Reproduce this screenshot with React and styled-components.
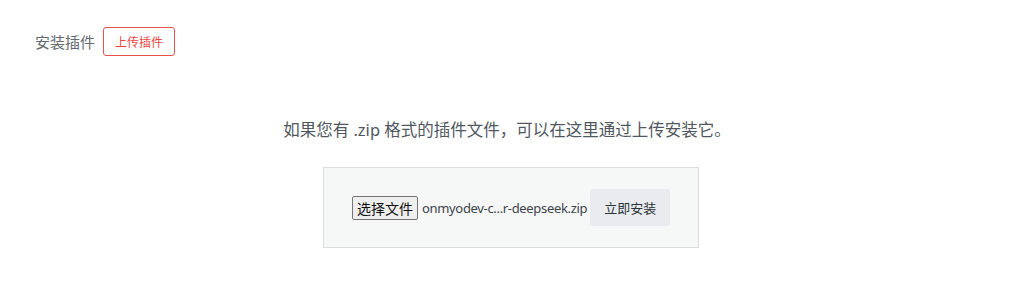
import React from "react";
import styled, { createGlobalStyle } from "styled-components";

const GlobalStyle = createGlobalStyle`
  html, body {
    margin: 0;
    padding: 0;
    background: #ffffff;
  }
  body {
    font-family: "Noto Sans", "Noto Sans CJK SC", sans-serif;
  }
`;

const Page = styled.div`
  width: 1024px;
  height: 307px;
  box-sizing: border-box;
  padding: 27px 20px 0 35px;
  display: flex;
  flex-direction: column;
`;

const HeaderRow = styled.div`
  display: flex;
  align-items: center;
  gap: 8px;
`;

const Title = styled.h1`
  margin: 0;
  font-size: 15px;
  font-weight: 400;
  color: #646970;
  font-family: "Noto Sans CJK SC", sans-serif;
`;

const OutlineButton = styled.button`
  height: 29px;
  padding: 0 11px;
  border: 1px solid #e5534b;
  border-radius: 3px;
  background: #ffffff;
  color: #e5483f;
  font-size: 12px;
  font-family: "Noto Sans CJK SC", sans-serif;
  cursor: pointer;
`;

const UploadSection = styled.div`
  display: flex;
  flex-direction: column;
  align-items: center;
  padding-right: 17px;
`;

const Help = styled.p`
  margin: 62px 8px 25px 0;
  font-size: 16.5px;
  line-height: 24px;
  color: #50575e;
  font-family: "Noto Sans", "Noto Sans CJK SC", sans-serif;
`;

const UploadForm = styled.form`
  display: flex;
  align-items: center;
  box-sizing: border-box;
  width: 376px;
  height: 81px;
  padding: 0 28px;
  border: 1px solid #dcdcde;
  background: #f6f7f7;
`;

const FileButton = styled.button`
  flex-shrink: 0;
  white-space: nowrap;
  height: 24px;
  padding: 0 4px;
  border: 1px solid #767676;
  border-radius: 2px;
  background: #efefef;
  color: #101010;
  font-size: 14px;
  font-family: "Noto Sans CJK SC", sans-serif;
  line-height: 20px;
`;

const FileName = styled.span`
  margin-left: 4px;
  font-size: 13px;
  letter-spacing: -0.33px;
  color: #3c434a;
  white-space: nowrap;
  font-family: "Noto Sans", sans-serif;
`;

const InstallButton = styled.button`
  flex-shrink: 0;
  margin-left: 3px;
  width: 80px;
  height: 37px;
  border: none;
  border-radius: 3px;
  background: #e9ebee;
  color: #2c3338;
  font-size: 13px;
  font-family: "Noto Sans CJK SC", sans-serif;
`;

export default function App() {
  return (
    <>
      <GlobalStyle />
      <Page>
        <HeaderRow>
          <Title>安装插件</Title>
          <OutlineButton type="button">上传插件</OutlineButton>
        </HeaderRow>
        <UploadSection>
          <Help>如果您有 .zip 格式的插件文件，可以在这里通过上传安装它。</Help>
          <UploadForm onSubmit={(e) => e.preventDefault()}>
            <FileButton type="button">选择文件</FileButton>
            <FileName>onmyodev-c...r-deepseek.zip</FileName>
            <InstallButton type="submit">立即安装</InstallButton>
          </UploadForm>
        </UploadSection>
      </Page>
    </>
  );
}
